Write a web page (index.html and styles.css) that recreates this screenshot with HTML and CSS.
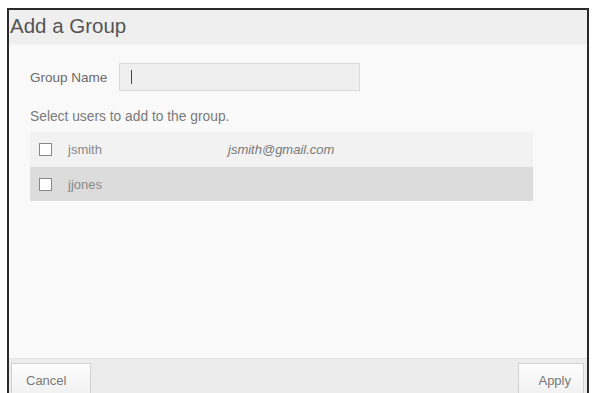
FILE: index.html
```html
<!DOCTYPE html>
<html lang="en">
<head>
    <meta charset="UTF-8">
    <title>Add a Group</title>
    <link rel="stylesheet" href="styles.css">
</head>
<body>
    <div class="dialog">
        <div class="dlgHead">Add a Group</div>
        <div class="dlgBody">
            <div class="nameRow">
                <span class="lbl">Group Name</span>
                <div class="nameInput"><span class="caret"></span></div>
            </div>
            <p class="hint">Select users to add to the group.</p>
            <div class="users">
                <div class="userRow">
                    <span class="box"></span>
                    <span class="uName">jsmith</span>
                    <span class="uMail">jsmith@gmail.com</span>
                </div>
                <div class="userRow dark">
                    <span class="box"></span>
                    <span class="uName">jjones</span>
                </div>
            </div>
        </div>
        <div class="dlgFoot">
            <div class="btn cancel">Cancel</div>
            <div class="btn apply">Apply</div>
        </div>
    </div>
</body>
</html>
```

FILE: styles.css
```css
*{
    box-sizing: border-box;
}
body{
    margin: 0;
    background: #fff;
    font-family: "Liberation Sans", Arial, sans-serif;
    overflow: hidden;
}
.dialog{
    margin: 8px 0 0 7px;
    width: 582px;
    height: 395px;
    border: 2px solid #2a2a2a;
    background: #f9f9f9;
    display: flex;
    flex-direction: column;
}
.dlgHead{
    height: 35px;
    background: #efefef;
    color: #555;
    font-size: 20.5px;
    line-height: 32px;
    padding-left: 1px;
    border-bottom: 1px solid #f3f3f3;
}
.dlgBody{
    flex: 1;
    padding: 18px 0 0 21px;
}
.nameRow{
    display: flex;
    align-items: center;
    gap: 12px;
}
.lbl{
    font-size: 13.5px;
    color: #6a6a6a;
}
.nameInput{
    width: 241px;
    height: 28px;
    background: #efefef;
    border: 1px solid #dadada;
    display: flex;
    align-items: center;
    padding-left: 11px;
}
.caret{
    width: 1px;
    height: 14px;
    background: #444;
}
.hint{
    margin: 18px 0 8px;
    font-size: 13.8px;
    color: #7a7a7a;
}
.users{
    width: 503px;
}
.userRow{
    height: 35px;
    background: #f2f2f2;
    display: flex;
    align-items: center;
    padding-left: 9px;
    font-size: 13px;
    color: #888;
}
.userRow.dark{
    height: 34px;
    background: #dcdcdc;
}
.box{
    width: 13px;
    height: 13px;
    border: 1px solid #888;
    background: #fff;
    margin-right: 16px;
}
.uName{
    width: 160px;
}
.uMail{
    font-style: italic;
    color: #777;
}
.dlgFoot{
    height: 43px;
    background: #ececec;
    border-top: 1px solid #e2e2e2;
    display: flex;
    justify-content: space-between;
    padding: 4px 3px 0 2px;
}
.btn{
    height: 36px;
    background: linear-gradient(#fdfdfd, #f0f0f0);
    border: 1px solid #d2d2d2;
    font-size: 13px;
    color: #777;
    padding-top: 9px;
    text-align: center;
}
.cancel{
    width: 80px;
    text-align: left;
    padding-left: 14px;
}
.apply{
    width: 66px;
    text-align: right;
    padding-right: 12px;
}
```
